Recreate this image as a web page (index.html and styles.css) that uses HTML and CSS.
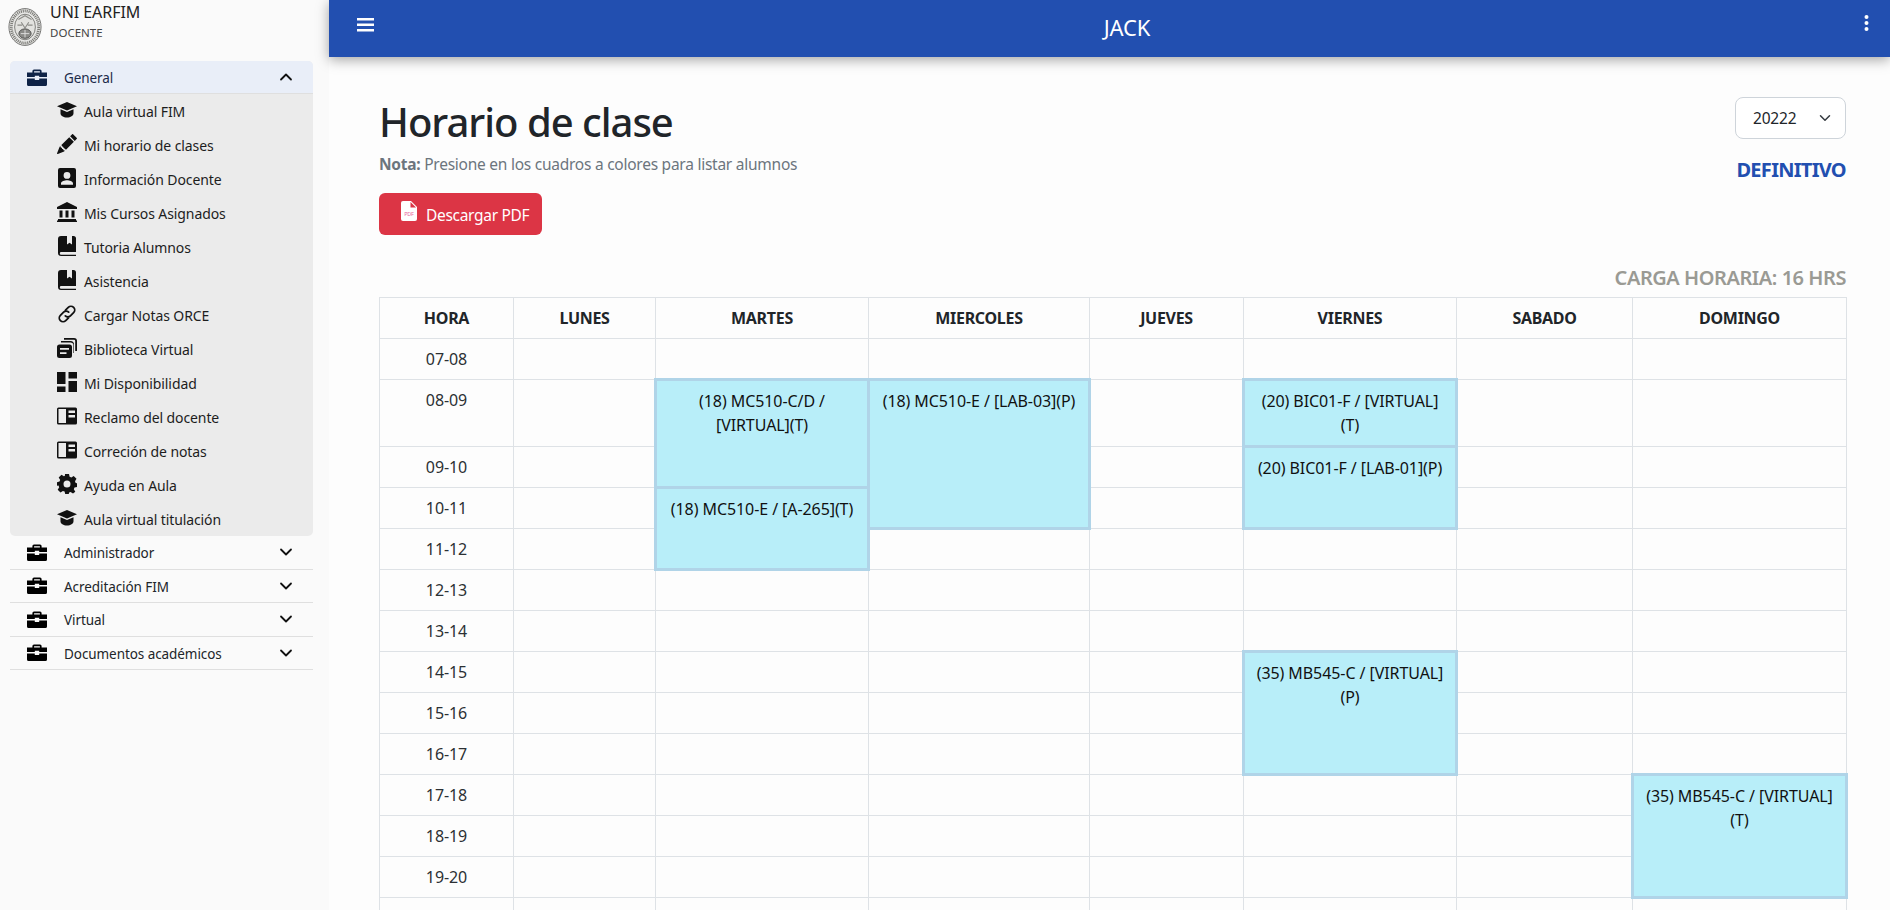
FILE: index.html
```html
<!DOCTYPE html>
<html lang="es">
<head>
<meta charset="utf-8">
<title>Horario de clase</title>
<link rel="stylesheet" href="styles.css">
</head>
<body>
<svg class="defs" width="0" height="0" aria-hidden="true">
  <defs>
    <symbol id="i-brief" viewBox="0 0 20 17"><path d="M7 0.500h6a1.600 1.600 0 0 1 1.600 1.600V3.600H20V8H12.200V6.800H7.800V8H0V3.600H5.400V2.100A1.600 1.600 0 0 1 7 .5zM7.100 2.200v1.400h5.800V2.200zM0 9.400h7.800v1.600h4.400V9.400H20v6a1.600 1.600 0 0 1-1.600 1.600H1.600A1.600 1.600 0 0 1 0 15.400z"/></symbol>
    <symbol id="i-grad" viewBox="0 0 20 16"><path d="M10 0 20 4.200 10 8.400 0 4.200zM3.500 7.300 10 10 16.500 7.300V11.200C16.500 13.800 13.600 15.500 10 15.500S3.500 13.800 3.500 11.200z"/></symbol>
    <symbol id="i-pencil" viewBox="0 0 16 16"><path d="M12.854.146a.5.5 0 0 0-.707 0L10.500 1.793 14.207 5.500l1.647-1.646a.5.5 0 0 0 0-.708l-3-3zm.646 6.061L9.793 2.500 3.293 9H3.500a.5.5 0 0 1 .5.5v.5h.5a.5.5 0 0 1 .5.5v.5h.5a.5.5 0 0 1 .5.5v.5h.5a.5.5 0 0 1 .5.5v.207l6.500-6.500zm-7.468 7.468A.5.5 0 0 1 6 13.500V13h-.5a.5.5 0 0 1-.5-.5V12h-.5a.5.5 0 0 1-.5-.5V11h-.5a.5.5 0 0 1-.5-.5V10h-.5a.499.499 0 0 1-.175-.032l-.179.178a.5.5 0 0 0-.11.168l-2 5a.5.5 0 0 0 .65.65l5-2a.5.5 0 0 0 .168-.11l.178-.178z"/></symbol>
    <symbol id="i-person" viewBox="0 0 18 20"><path fill-rule="evenodd" d="M2 0h14a2 2 0 0 1 2 2v16a2 2 0 0 1-2 2H2a2 2 0 0 1-2-2V2a2 2 0 0 1 2-2zM9 4a3.400 3.400 0 1 0 0 6.800A3.400 3.400 0 0 0 9 4zM3 16.800h12v-1.300c0-2-3.600-3.200-6-3.200s-6 1.200-6 3.200z"/></symbol>
    <symbol id="i-bank" viewBox="0 0 20 20"><path d="M10 0 20 5V7H0V5zM2.500 8.500H5.500V15.500H2.500zM8.500 8.500H11.500V15.500H8.500zM14.500 8.500H17.500V15.500H14.500zM1 17H19V18.500H20V20H0V18.500H1z"/></symbol>
    <symbol id="i-book" viewBox="0 0 18 20"><path fill-rule="evenodd" d="M3 0h6v8.500l2.500-1.700L14 8.500V0h1.500A2.500 2.500 0 0 1 18 2.500V16H3.200a1.400 1.400 0 0 0 0 2.800H18V20H3a3 3 0 0 1-3-3V3a3 3 0 0 1 3-3z"/></symbol>
    <symbol id="i-link" viewBox="0 0 20 20"><path fill="none" stroke="currentColor" stroke-width="1.800" stroke-linecap="round" d="M8.500 6.200 11.300 3.400a3.600 3.600 0 0 1 5.300 5.300L13.400 11.900a3.600 3.600 0 0 1-5.100 0M11.500 13.800 8.700 16.600a3.600 3.600 0 0 1-5.300-5.300L6.600 8.100a3.600 3.600 0 0 1 5.100 0"/></symbol>
    <symbol id="i-library" viewBox="0 0 20 20"><path fill-rule="evenodd" d="M2.500 6.500h10A2.500 2.500 0 0 1 15 9v8.500a2.500 2.500 0 0 1-2.500 2.500h-10A2.500 2.500 0 0 1 0 17.500V9a2.500 2.500 0 0 1 2.500-2.500zM3 10v1.800h9V10zM3 14.200V16h6.500v-1.800zM4 3h9.500A3.500 3.500 0 0 1 17 6.500V15h-.6V6.500A2.900 2.900 0 0 0 13.500 4.600H4zM7 0h10a3 3 0 0 1 3 3v10h-1.800V3a1.200 1.200 0 0 0-1.200-1.200H7z"/></symbol>
    <symbol id="i-dash" viewBox="0 0 20 20"><path d="M0 0H8.500V12H0zM11.500 0H20V6.500H11.500zM11.500 9H20V20H11.500zM0 14.500H8.500V20H0z"/></symbol>
    <symbol id="i-layout" viewBox="0 0 20 20"><path fill-rule="evenodd" d="M1.500 1.500h17A1.500 1.500 0 0 1 20 3v14a1.500 1.500 0 0 1-1.500 1.500h-17A1.500 1.500 0 0 1 0 17V3a1.500 1.500 0 0 1 1.500-1.500zM1.500 3v14H9V3zM11.500 4.500V7H18V4.500zM11.500 9V11.500H18V9z"/></symbol>
    <symbol id="i-gear" viewBox="0 0 20 20"><path fill-rule="evenodd" d="M8 0h4l.6 2.800 1.700.7L16.700 2l2.800 2.800-1.500 2.400.7 1.700 1.300.3v3.800l-2.500.6-.7 1.700 1.500 2.400L16 19.500l-2.400-1.500-1.500.6L11.800 20H8.200l-.6-2.400-1.700-.6-2.400 1.500L.7 15.700l1.500-2.400-.7-1.700L0 11.800V8.200l2.500-.6.700-1.700L1.700 3.500 4.500.7l2.400 1.500 1-.4zM10 6.500a3.500 3.500 0 1 0 0 7 3.500 3.500 0 0 0 0-7z"/></symbol>
  </defs>
</svg>

<aside class="sidebar">
  <div class="brand">
    <svg class="seal" viewBox="0 0 36 40" aria-hidden="true">
      <ellipse cx="18" cy="20" rx="17" ry="19.500" fill="#e8e8e6" stroke="#6f6f6c" stroke-width="1"/>
      <ellipse cx="18" cy="20" rx="14.500" ry="17" fill="none" stroke="#7e7e7a" stroke-width="3" stroke-dasharray="1.200 .9"/>
      <ellipse cx="18" cy="20" rx="11" ry="13.500" fill="#e2e2df" stroke="#5f5f5c" stroke-width=".8"/>
      <path d="M11 12 18 8l7 4M14 15l4 6 4-6M10 18h5M21 18h5" fill="none" stroke="#8c8c88" stroke-width="1.200"/>
      <ellipse cx="18" cy="27" rx="6.500" ry="5" fill="#8a8a87" stroke="#454543" stroke-width=".9"/>
      <path d="M13.500 27h9M18 23v8" stroke="#dedede" stroke-width="1"/>
    </svg>
    <div class="brand-text">
      <div class="brand-name">UNI EARFIM</div>
      <div class="brand-role">DOCENTE</div>
    </div>
  </div>
  <nav class="menu">
    <div class="group group-open">
      <div class="group-head head-open">
        <svg class="ico-brief"><use href="#i-brief"/></svg>
        <span class="group-label">General</span>
        <svg class="chev" viewBox="0 0 16 16"><path d="M3 10.500 8 5.500l5 5" /></svg>
      </div>
      <ul class="sub">
        <li><svg class="ico"><use href="#i-grad"/></svg>Aula virtual FIM</li>
        <li><svg class="ico"><use href="#i-pencil"/></svg>Mi horario de clases</li>
        <li><svg class="ico"><use href="#i-person"/></svg>Información Docente</li>
        <li><svg class="ico"><use href="#i-bank"/></svg>Mis Cursos Asignados</li>
        <li><svg class="ico"><use href="#i-book"/></svg>Tutoria Alumnos</li>
        <li><svg class="ico"><use href="#i-book"/></svg>Asistencia</li>
        <li><svg class="ico"><use href="#i-link"/></svg>Cargar Notas ORCE</li>
        <li><svg class="ico"><use href="#i-library"/></svg>Biblioteca Virtual</li>
        <li><svg class="ico"><use href="#i-dash"/></svg>Mi Disponibilidad</li>
        <li><svg class="ico"><use href="#i-layout"/></svg>Reclamo del docente</li>
        <li><svg class="ico"><use href="#i-layout"/></svg>Correción de notas</li>
        <li><svg class="ico"><use href="#i-gear"/></svg>Ayuda en Aula</li>
        <li><svg class="ico"><use href="#i-grad"/></svg>Aula virtual titulación</li>
      </ul>
    </div>
    <div class="group-head"><svg class="ico-brief"><use href="#i-brief"/></svg><span class="group-label">Administrador</span><svg class="chev" viewBox="0 0 16 16"><path d="M3 5.500 8 10.500l5-5"/></svg></div>
    <div class="group-head"><svg class="ico-brief"><use href="#i-brief"/></svg><span class="group-label">Acreditación FIM</span><svg class="chev" viewBox="0 0 16 16"><path d="M3 5.500 8 10.500l5-5"/></svg></div>
    <div class="group-head"><svg class="ico-brief"><use href="#i-brief"/></svg><span class="group-label">Virtual</span><svg class="chev" viewBox="0 0 16 16"><path d="M3 5.500 8 10.500l5-5"/></svg></div>
    <div class="group-head"><svg class="ico-brief"><use href="#i-brief"/></svg><span class="group-label">Documentos académicos</span><svg class="chev" viewBox="0 0 16 16"><path d="M3 5.500 8 10.500l5-5"/></svg></div>
  </nav>
</aside>

<div class="page">
  <header class="topbar">
    <svg class="burger" viewBox="0 0 17 14"><path d="M0 0h17v2.400H0zM0 5.500h17v2.400H0zM0 11h17v2.400H0z"/></svg>
    <div class="top-title">JACK</div>
    <svg class="dots" viewBox="0 0 4 16"><circle cx="2" cy="2" r="2"/><circle cx="2" cy="8" r="2"/><circle cx="2" cy="14" r="2"/></svg>
  </header>

  <main class="content">
    <div class="head-row">
      <div>
        <h1 class="title">Horario de clase</h1>
        <p class="note"><b>Nota:</b> Presione en los cuadros a colores para listar alumnos</p>
        <button class="btn-pdf" type="button">
          <svg class="pdf-ico" viewBox="0 0 16 20"><path d="M2 0h8l6 6v12a2 2 0 0 1-2 2H2a2 2 0 0 1-2-2V2a2 2 0 0 1 2-2z" fill="#fff"/><path d="M9.500 1 15 6.500H9.500z" fill="#dc3545"/><text x="8" y="15" class="pdf-txt">PDF</text></svg>
          Descargar PDF
        </button>
      </div>
      <div class="head-side">
        <div class="select">20222<svg class="sel-chev" viewBox="0 0 16 16"><path d="M2 5l6 6 6-6"/></svg></div>
        <div class="status">DEFINITIVO</div>
      </div>
    </div>
    <div class="load">CARGA HORARIA: 16 HRS</div>
    <table class="grid">
      <colgroup>
        <col class="c-hora"><col class="c-lun"><col class="c-mar"><col class="c-mie"><col class="c-jue"><col class="c-vie"><col class="c-sab"><col class="c-dom">
      </colgroup>
      <thead>
        <tr><th>HORA</th><th>LUNES</th><th>MARTES</th><th>MIERCOLES</th><th>JUEVES</th><th>VIERNES</th><th>SABADO</th><th>DOMINGO</th></tr>
      </thead>
      <tbody>
        <tr><td>07-08</td><td></td><td></td><td></td><td></td><td></td><td></td><td></td></tr>
        <tr><td>08-09</td><td></td><td class="slot" rowspan="2">(18) MC510-C/D / [VIRTUAL](T)</td><td class="slot" rowspan="3">(18) MC510-E / [LAB-03](P)</td><td></td><td class="slot">(20) BIC01-F / [VIRTUAL](T)</td><td></td><td></td></tr>
        <tr><td>09-10</td><td></td><td></td><td class="slot" rowspan="2">(20) BIC01-F / [LAB-01](P)</td><td></td><td></td></tr>
        <tr><td>10-11</td><td></td><td class="slot" rowspan="2">(18) MC510-E / [A-265](T)</td><td></td><td></td><td></td></tr>
        <tr><td>11-12</td><td></td><td></td><td></td><td></td><td></td><td></td></tr>
        <tr><td>12-13</td><td></td><td></td><td></td><td></td><td></td><td></td><td></td></tr>
        <tr><td>13-14</td><td></td><td></td><td></td><td></td><td></td><td></td><td></td></tr>
        <tr><td>14-15</td><td></td><td></td><td></td><td></td><td class="slot" rowspan="3">(35) MB545-C / [VIRTUAL](P)</td><td></td><td></td></tr>
        <tr><td>15-16</td><td></td><td></td><td></td><td></td><td></td><td></td></tr>
        <tr><td>16-17</td><td></td><td></td><td></td><td></td><td></td><td></td></tr>
        <tr><td>17-18</td><td></td><td></td><td></td><td></td><td></td><td></td><td class="slot" rowspan="3">(35) MB545-C / [VIRTUAL](T)</td></tr>
        <tr><td>18-19</td><td></td><td></td><td></td><td></td><td></td><td></td></tr>
        <tr><td>19-20</td><td></td><td></td><td></td><td></td><td></td><td></td></tr>
        <tr class="row-tail"><td></td><td></td><td></td><td></td><td></td><td></td><td></td><td></td></tr>
      </tbody>
    </table>
  </main>
</div>
</body>
</html>
```

FILE: styles.css
```css
* { box-sizing: border-box; }
html, body { margin: 0; height: 100%; overflow: hidden; }
body {
  display: flex;
  font-family: "Noto Sans", "Open Sans", sans-serif;
  font-size: 16px;
  line-height: 24px;
  color: #212529;
  background: #fdfdfd;
}
.defs { position: absolute; }

/* Sidebar */
.sidebar { width: 329px; flex: none; background: #fafafa; height: 910px; }
.brand { display: flex; gap: 8px; padding-left: 8px; height: 61px; }
.seal { width: 34px; height: 40px; margin-top: 7px; flex: none; }
.brand-name { font-size: 16px; line-height: 24px; letter-spacing: -.05px; color: #222; }
.brand-role { font-size: 11.500px; line-height: 18px; color: #444; }

.menu { margin: 0 16px 0 10px; width: 303px; }
.group-open { border-radius: 5px; overflow: hidden; background: #ebebeb; }
.group-head {
  display: flex; align-items: center;
  height: 33.500px; padding: 2px 19px 0 17px;
  border-bottom: 1px solid #dfdfdf;
  font-size: 13.500px; letter-spacing: -.07px; color: #212529;
}
.head-open { height: 33px; background: #e9eef8; color: #1c2a4a; }
.ico-brief { width: 20px; height: 17px; flex: none; fill: #000; margin-bottom: 2px; }
.head-open .ico-brief { fill: #0f2347; }
.group-label { flex: 1; margin-left: 17px; }
.chev { width: 16px; height: 16px; flex: none; fill: none; stroke: #111; stroke-width: 1.800; stroke-linecap: round; stroke-linejoin: round; margin-bottom: 2px; }
.sub { list-style: none; margin: 0; padding: 0 0 0 47px; }
.sub li { display: flex; align-items: center; height: 34px; padding-top: 2px; font-size: 14px; letter-spacing: -.1px; color: #1d1d1d; }
.ico { width: 20px; height: 20px; flex: none; margin-right: 7px; margin-top: -4px; fill: #111; color: #111; }

/* Top bar */
.page { flex: 1; min-width: 0; display: flex; flex-direction: column; height: 910px; }
.topbar {
  position: relative; z-index: 2;
  flex: none; height: 57px;
  display: flex; align-items: flex-start;
  padding: 18px 21px 0 28px;
  background: #224fb0;
  box-shadow: 0 3px 12px rgba(0,0,0,.35);
  fill: #fff;
}
.burger { width: 17px; height: 14px; flex: none; }
.top-title {
  flex: 1; margin-top: -8px; padding-left: 16px;
  text-align: center; color: #fff; font-size: 22px; line-height: 34px; letter-spacing: -.2px;
}
.dots { width: 5px; height: 16px; margin-top: -3px; flex: none; }

/* Content */
.content { padding: 40px 44px 0 50px; flex: 1; min-height: 0; overflow: hidden; }
.head-row { display: flex; justify-content: space-between; align-items: flex-start; }
.title { margin: 0; font-size: 40px; line-height: 48px; font-weight: 500; letter-spacing: -1px; color: #212529; padding-top: 1px; }
.note { margin: 6px 0 0; font-size: 15.500px; line-height: 24px; letter-spacing: -.25px; color: #6c757d; }
.note b { font-weight: 700; }
.btn-pdf {
  display: flex; align-items: flex-start; gap: 9px;
  margin-top: 17px; width: 163px; height: 42px; padding: 0 0 0 22px;
  background: #dc3545; color: #fff; border: 0; border-radius: 6px;
  font: inherit; font-size: 15.500px; letter-spacing: -.3px; line-height: 44px;
}
.pdf-ico { width: 16px; height: 20px; margin-top: 8px; flex: none; }
.pdf-txt { font-size: 5.500px; text-anchor: middle; fill: #e8649c; font-family: "Noto Sans", sans-serif; }
.head-side { display: flex; flex-direction: column; align-items: flex-end; }
.select {
  display: flex; align-items: center; justify-content: space-between;
  width: 111px; height: 42px; padding: 0 14px 0 17px;
  border: 1px solid #ced4da; border-radius: 8px; background: #fff;
  font-size: 15.500px; letter-spacing: -.2px; color: #212529;
}
.sel-chev { width: 12px; height: 12px; fill: none; stroke: #343a40; stroke-width: 2; stroke-linecap: round; stroke-linejoin: round; }
.status { margin-top: 17px; font-size: 20px; line-height: 28px; font-weight: 700; letter-spacing: -.7px; color: #224fb0; }
.load { margin-top: 29px; text-align: right; font-size: 20px; line-height: 28px; font-weight: 600; letter-spacing: -.45px; color: #9a9a94; height: 33px; }

/* Table */
.grid { width: 1467px; border-collapse: collapse; table-layout: fixed; font-size: 16px; color: #212529; }
.grid th, .grid td { border: 1px solid #dee2e6; padding: 8px; text-align: center; }
.grid td { line-height: 24px; letter-spacing: -.08px; vertical-align: top; }
.grid th { font-weight: 700; height: 41px; letter-spacing: -.3px; }
.grid td:first-child { color: #2c3034; }
.grid .slot { background: #b8eef9; border: 3px solid #b0d4e8; color: #111; }
.row-tail td { height: 41px; }
.c-hora { width: 134px; }
.c-lun { width: 142px; }
.c-mar { width: 213px; }
.c-mie { width: 221px; }
.c-jue { width: 154px; }
.c-vie { width: 213px; }
.c-sab { width: 176px; }
.c-dom { width: 214px; }
```
